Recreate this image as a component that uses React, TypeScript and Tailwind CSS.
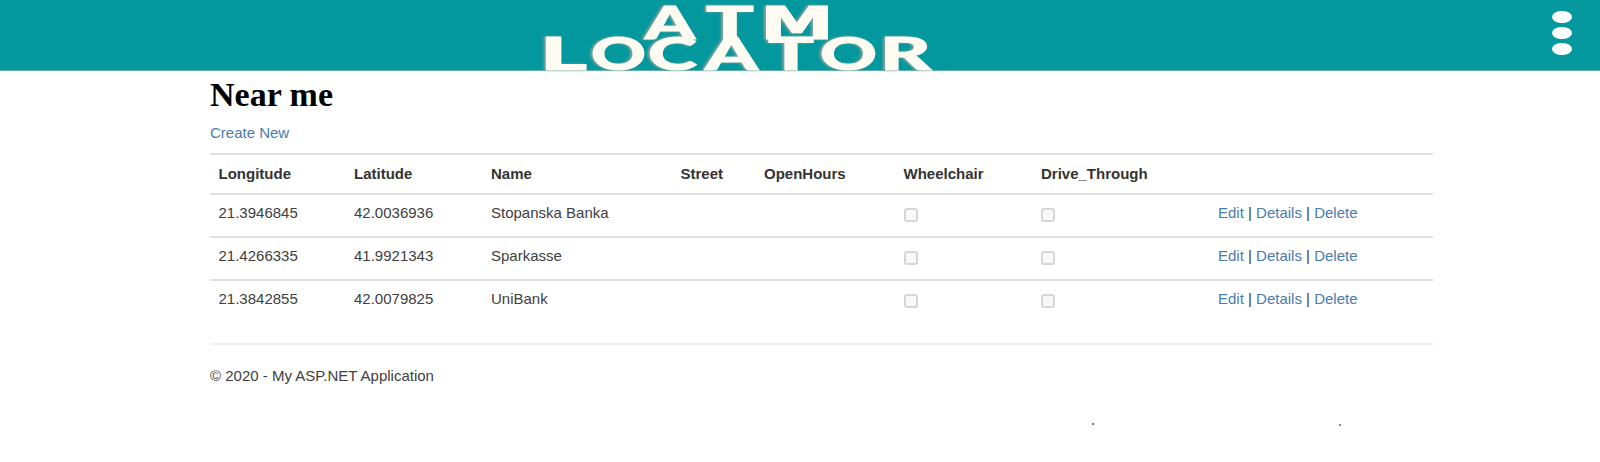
const rows = [
  { lon: '21.3946845', lat: '42.0036936', name: 'Stopanska Banka' },
  { lon: '21.4266335', lat: '41.9921343', name: 'Sparkasse' },
  { lon: '21.3842855', lat: '42.0079825', name: 'UniBank' },
];

const columns =
  'grid grid-cols-[135.5px_137px_189.5px_83.5px_139.5px_137.5px_177px_1fr] pl-[8.5px] border-t-2 border-[#dfdfdf]';

const lato = 'font-[Lato] font-black text-[46px]';
const dejavu = "font-['DejaVu_Sans'] font-bold text-[45px]";

// x: left edge of the advance box, w: advance width, y: baseline
const letters = [
  { ch: 'A', x: 645, w: 50, y: 38.5, font: lato },
  { ch: 'T', x: 706, w: 48, y: 38.5, font: lato },
  { ch: 'M', x: 760, w: 74, y: 38.5, font: dejavu },
  { ch: 'L', x: 540, w: 47, y: 69.5, font: lato },
  { ch: 'O', x: 591, w: 55, y: 69.5, font: lato },
  { ch: 'C', x: 648, w: 49, y: 69.5, font: lato },
  { ch: 'A', x: 705, w: 53, y: 69.5, font: lato },
  { ch: 'T', x: 768, w: 46, y: 69.5, font: lato },
  { ch: 'O', x: 820, w: 57, y: 69.5, font: lato },
  { ch: 'R', x: 880, w: 51, y: 69.5, font: lato },
];

function Logo() {
  return (
    <svg width="420" height="71" viewBox="530 0 420 71" className="ml-[530px] overflow-visible" aria-label="ATM Locator">
      <g className="fill-[#fdfbf2] stroke-[#fdfbf2] stroke-1 [filter:drop-shadow(-2px_0_1px_#8aa39a)]">
        {letters.map((l, i) => (
          <text key={i} x={l.x} y={l.y} textLength={l.w} lengthAdjust="spacingAndGlyphs" className={l.font}>
            {l.ch}
          </text>
        ))}
      </g>
    </svg>
  );
}

function Box() {
  return <span role="checkbox" aria-checked="false" aria-disabled="true" className="mt-[13px] block size-[14px] rounded-[3px] border-2 border-[#d6d6d6] bg-[#f8f8f8]" />;
}

function Link({ children }: { children: string }) {
  return <a href="#" className="text-[#4a7cae]">{children}</a>;
}

export default function App() {
  return (
    <div className="relative h-[462px] overflow-hidden bg-white font-['Liberation_Sans',Arial,sans-serif] text-[15px] leading-[21px] text-[#404040]">
      <header className="flex h-[71px] justify-between border-b border-[#5fb0b3] bg-[#03989e]">
        <Logo />
        <button aria-label="Menu" className="mr-[28px] flex flex-col gap-[4px] pt-[11px]">
          <span className="h-[12px] w-[20px] rounded-[9px/6px] bg-white" />
          <span className="h-[12px] w-[20px] rounded-[9px/6px] bg-white" />
          <span className="h-[12px] w-[20px] rounded-[9px/6px] bg-white" />
        </button>
      </header>
      <main className="ml-[210px] w-[1223px]">
        <h2 className="h-[51px] pt-[4px] font-['Liberation_Serif',serif] text-[34px] leading-[39px] font-bold text-black">Near me</h2>
        <p className="h-[31px]"><Link>Create New</Link></p>
        <div className={`${columns} h-[40px] pt-[8px] font-bold text-[#333]`}>
          <span>Longitude</span>
          <span>Latitude</span>
          <span>Name</span>
          <span>Street</span>
          <span>OpenHours</span>
          <span>Wheelchair</span>
          <span>Drive_Through</span>
        </div>
        {rows.map((r) => (
          <div key={r.lon} className={`${columns} h-[43px]`}>
            <span className="pt-[7px]">{r.lon}</span>
            <span className="pt-[7px]">{r.lat}</span>
            <span className="pt-[7px]">{r.name}</span>
            <span />
            <span />
            <Box />
            <Box />
            <span className="pt-[7px]">
              <Link>Edit</Link> | <Link>Details</Link> | <Link>Delete</Link>
            </span>
          </div>
        ))}
        <footer className="mt-[21px] border-t-2 border-[#eeeeee] pt-[20px]">© 2020 - My ASP.NET Application</footer>
      </main>
      <span className="absolute top-[423px] left-[1092px] size-[2px] bg-[#777]" />
      <span className="absolute top-[424px] left-[1339px] size-[2px] bg-[#888]" />
    </div>
  );
}
